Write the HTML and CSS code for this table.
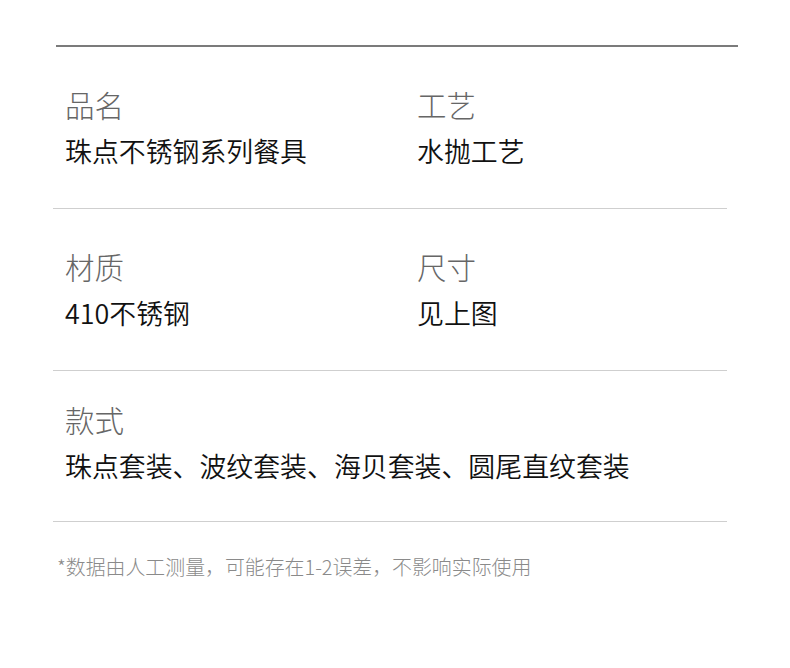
FILE: index.html
```html
<!DOCTYPE html>
<html lang="zh-CN">
<head>
<meta charset="utf-8">
<link rel="stylesheet" href="styles.css">
</head>
<body>
<div class="page">
  <div class="topline"></div>
  <div class="row">
    <div class="cell">
      <div class="label">品名</div>
      <div class="value">珠点不锈钢系列餐具</div>
    </div>
    <div class="cell">
      <div class="label">工艺</div>
      <div class="value">水抛工艺</div>
    </div>
  </div>
  <div class="row">
    <div class="cell">
      <div class="label">材质</div>
      <div class="value">410不锈钢</div>
    </div>
    <div class="cell">
      <div class="label">尺寸</div>
      <div class="value">见上图</div>
    </div>
  </div>
  <div class="row row-wide">
    <div class="cell">
      <div class="label">款式</div>
      <div class="value">珠点套装、波纹套装、海贝套装、圆尾直纹套装</div>
    </div>
  </div>
  <p class="note">*数据由人工测量，可能存在1-2误差，不影响实际使用</p>
</div>
</body>
</html>
```
FILE: styles.css
```css
* { box-sizing: border-box; }
body {
  margin: 0;
  background: #ffffff;
  font-family: "Noto Sans CJK SC", "Noto Sans", sans-serif;
}
.page {
  width: 790px;
  height: 668px;
  padding-top: 45px;
}
.topline {
  margin-left: 56px;
  width: 682px;
  height: 2px;
  background: #7b7b7b;
}
.row {
  margin-left: 53px;
  width: 674px;
  padding: 40px 0 41px 12px;
  border-bottom: 1px solid #cfcfcf;
  display: grid;
  grid-template-columns: 352px 1fr;
}
.row-wide {
  grid-template-columns: 1fr;
  padding-top: 31px;
  padding-bottom: 39px;
}
.label {
  font-size: 29.5px;
  line-height: 35px;
  font-weight: 300;
  color: #666666;
}
.value {
  margin-top: 13px;
  font-size: 26.9px;
  line-height: 32px;
  font-weight: 350;
  color: #111111;
}
.note {
  margin: 31px 0 0 57px;
  font-size: 19.9px;
  line-height: 28px;
  font-weight: 300;
  color: #8a8a8a;
}
```
